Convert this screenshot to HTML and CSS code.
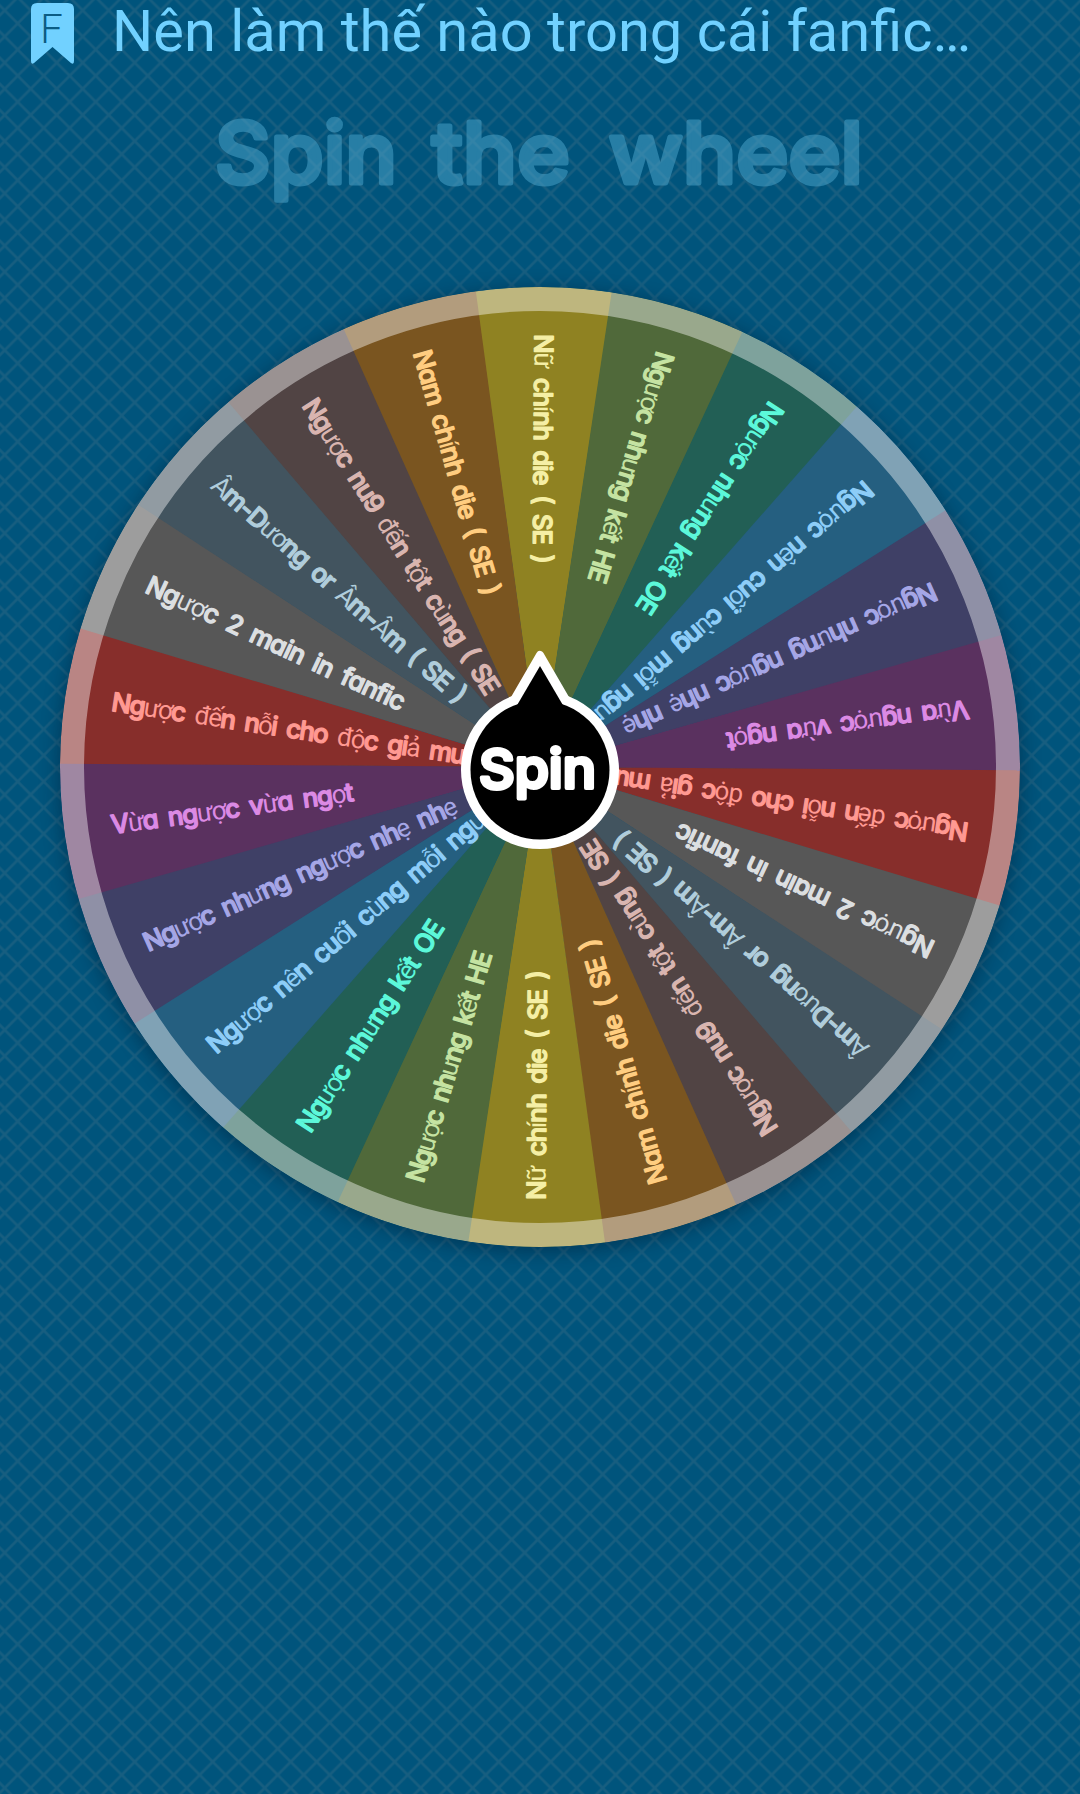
FILE: index.html
```
<!DOCTYPE html>
<html lang="vi">
<head>
    <meta charset="UTF-8">
    <meta name="viewport" content="width=device-width, initial-scale=1.0">
    <title>Spin the wheel</title>
    <link rel="stylesheet" href="styles.css">
</head>
<body>
    <header>
        <svg class="bookmark" viewBox="0 0 42 61" width="43" height="61" preserveAspectRatio="none">
            <path d="M6 0H36Q42 0 42 6V58Q42 62 39 60L21 44L3 60Q0 62 0 58V6Q0 0 6 0Z"/>
            <text x="9" y="40" textLength="22" lengthAdjust="spacingAndGlyphs">F</text>
        </svg>
        <p class="question">Nên làm thế nào trong cái fanfic…</p>
    </header>
    <h1>
        <svg class="title" viewBox="0 -25 1080 135" width="1080" height="135">
            <g>
                <text x="215" y="78" textLength="182" lengthAdjust="spacingAndGlyphs">Spin</text>
                <text x="432" y="78" textLength="138" lengthAdjust="spacingAndGlyphs">the</text>
                <text x="609" y="78" textLength="254" lengthAdjust="spacingAndGlyphs">wheel</text>
            </g>
        </svg>
    </h1>
    <main>
        <svg class="wheel" viewBox="-480 -480 960 960" width="960" height="960">
            <g id="slices"></g>
            <circle class="rim" r="468"/>
            <g id="labels"></g>
            <g class="hub">
                <path class="edge" d="M0 -112L29 -62H-29Z"/>
                <circle class="edge" r="77" cy="3"/>
                <path d="M0 -101L24 -60H-24Z"/>
                <circle r="69.5" cy="3"/>
                <text x="-61" y="21" textLength="117" lengthAdjust="spacingAndGlyphs">Spin</text>
            </g>
        </svg>
    </main>
    <script src="wheel.js"></script>
</body>
</html>
```
FILE: styles.css
```
*{
    margin: 0;
    padding: 0;
    box-sizing: border-box;
}

html{
    height: 100%;
}

body{
    height: 100%;
    overflow: hidden;
    font-family: Roboto, "Noto Sans", sans-serif;
    background-color: #00547c;
    /* diagonal lattice, the corner stops join the tiles */
    background-image:
        linear-gradient(45deg, #175e80 0 2.2%, transparent 5% 45%, #175e80 47.8% 52.2%, transparent 55% 95%, #175e80 97.8%),
        linear-gradient(135deg, #175e80 0 2.2%, transparent 5% 45%, #175e80 47.8% 52.2%, transparent 55% 95%, #175e80 97.8%);
    background-size: 26px 26.15px;
    background-position: 4.7px 10.4px;
}

header{
    display: flex;
    align-items: flex-start;
    gap: 38px;
    height: 75px;
    padding: 3px 0 0 31px;
}
.bookmark path{
    fill: #71d1ff;
}
.bookmark text{
    font-size: 40px;
    font-weight: 300;
    fill: #0b5c83;
}
.question{
    margin-top: -3px;
    font-size: 57.8px;
    line-height: 62px;
    white-space: nowrap;
    color: #71d1ff;
}

h1{
    height: 135px;
    margin-top: 5px;
}
.title{
    display: block;
}
.title g{
    opacity: .5;
}
.title text{
    font-family: Inter, sans-serif;
    font-size: 84px;
    font-weight: 500;
    fill: #4ea8cf;
    stroke: #4ea8cf;
    stroke-width: 5;
    stroke-linejoin: round;
}

main{
    display: flex;
    justify-content: center;
    margin-top: 72px;
}
.wheel{
    border-radius: 50%;
    box-shadow: 0 4px 20px rgba(0, 20, 40, .45);
}
.rim{
    fill: none;
    stroke: rgba(255, 255, 255, .42);
    stroke-width: 24;
}

.label{
    font-family: Inter, sans-serif;
    font-size: 26px;
    font-weight: 500;
    font-feature-settings: "cv11";
    word-spacing: 5px;
    stroke-width: 1.3;
    stroke-linejoin: round;
    white-space: pre;
}
.label .thin{
    font-family: Roboto, sans-serif;
    font-size: 26px;
    font-weight: 400;
    stroke: none;
}

.hub .edge{
    fill: #fff;
    stroke: #fff;
    stroke-width: 8;
    stroke-linejoin: round;
}
.hub circle.edge{
    stroke-width: 4;
}
.hub text{
    font-family: Inter, sans-serif;
    font-size: 54px;
    font-weight: 500;
    fill: #fff;
    stroke: #fff;
    stroke-width: 4;
    stroke-linejoin: round;
}
```
FILE: wheel.js
```
// text, slice colour, text colour, text length
var options = [
    ['Nữ chính die ( SE )', '#8f8222', '#f5efa5', 230],
    ['Ngược nhưng kết HE', '#50693a', '#c5e3a2', 240],
    ['Ngược nhưng kết OE', '#225f55', '#5cf8da', 247],
    ['Ngược nên cuối cùng mỗi ngườ', '#255f80', '#8dcdf8', 372],
    ['Ngược nhưng ngược nhẹ nhẹ', '#3f4066', '#a5a6e6', 341],
    ['Vừa ngược vừa ngọt', '#5a315f', '#dc8ae4', 245],
    ['Ngược đến nỗi cho độc giả mu', '#872e2b', '#ff9992', 358],
    ['Ngược 2 main in fanfic', '#575757', '#dcdfe1', 283],
    ['Âm-Dương or Âm-Âm ( SE )', '#42545f', '#b0cddb', 330],
    ['Ngược nu9 đến tột cùng ( SE', '#514444', '#d9b5b0', 345],
    ['Nam chính die ( SE )', '#7a5520', '#ffcd80', 254]
];
var count = options.length * 2;
var step = 360 / count;
var offset = 0.4;
var radius = 480;

function point(deg){
    var rad = (deg - 90) * Math.PI / 180;
    return (radius * Math.cos(rad)).toFixed(2) + ' ' + (radius * Math.sin(rad)).toFixed(2);
}

var slices = '';
var labels = '';
for(var i = 0; i < count; i++){
    var option = options[i % options.length];
    var angle = offset + i * step;
    slices += '<path fill="' + option[1] + '" d="M0 0L' + point(angle - step / 2) + 'A480 480 0 0 1 ' + point(angle + step / 2 + 0.1) + 'Z"/>';
    // accented letters are set in the lighter font
    var text = option[0].replace(/[^\x00-\x7f]+/g, '<tspan class="thin">$&</tspan>');
    labels += '<text class="label" fill="' + option[2] + '" stroke="' + option[2] + '" x="-433" y="8.5" textLength="' + option[3] + '" transform="rotate(' + (angle + 90) + ')">' + text + '</text>';
}
document.querySelector('#slices').innerHTML = slices;
document.querySelector('#labels').innerHTML = labels;
```
